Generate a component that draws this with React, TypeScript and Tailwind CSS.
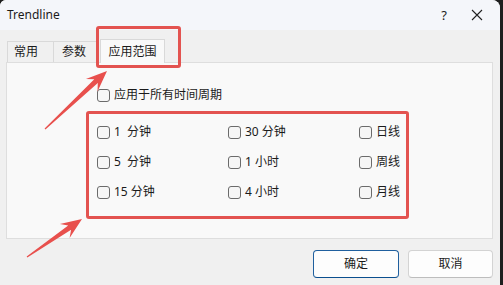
import React from "react";

type Pt = [number, number];

// barbed arrow polygon from tail to tip
const arrow = (tail: Pt, tip: Pt) => {
  const [x1, y1] = tail;
  const [x2, y2] = tip;
  const len = Math.hypot(x2 - x1, y2 - y1);
  const ux = (x2 - x1) / len;
  const uy = (y2 - y1) / len;
  const nx = -uy;
  const ny = ux;
  const at = (d: number, w: number): string =>
    `${(x2 - ux * d + nx * w).toFixed(1)},${(y2 - uy * d + ny * w).toFixed(1)}`;
  return [
    `${x1 - nx * 0.6},${y1 - ny * 0.6}`,
    `${x1 + nx * 0.6},${y1 + ny * 0.6}`,
    at(15, 2.6),
    at(21, 8.5),
    at(0, 0),
    at(21, -8.5),
    at(15, -2.6),
  ].join(" ");
};

const Check: React.FC<{ label: string }> = ({ label }) => (
  <label className="flex items-center gap-[4px] whitespace-pre">
    <span className="w-[13px] h-[13px] rounded-[3px] border border-[#6b6b6b] bg-[#f6f6f6]" />
    <span>{label}</span>
  </label>
);

const periods = [
  ["1  分钟", "30 分钟", "日线"],
  ["5  分钟", "1 小时", "周线"],
  ["15 分钟", "4 小时", "月线"],
];

export default function App() {
  return (
    <div className="relative flex w-[503px] h-[285px] bg-[#1e1e1e] text-[12px] text-[#1b1b1b] font-['Noto_Sans',_'Noto_Sans_CJK_SC',_sans-serif]">
      <div className="flex flex-col w-[500px] h-full bg-[#f0f0f0] rounded-tr-[8px] rounded-tl-[6px] overflow-hidden">
        {/* title bar */}
        <div className="flex items-center h-[30px] bg-[#f4f6fa] pl-[7px]">
          <span className="flex-1 leading-none">Trendline</span>
          <span className="w-[20px] text-center text-[13px] leading-none">?</span>
          <span className="w-[46px] flex justify-center">
            <svg width="12" height="12" viewBox="0 0 12 12" fill="none" stroke="#222" strokeWidth="1.1">
              <path d="M1 1L11 11M11 1L1 11" />
            </svg>
          </span>
        </div>

        {/* tabs */}
        <div className="flex items-end h-[32px] pl-[7px]">
          <div className="w-[47px] h-[21px] pl-[6px] flex items-center border border-b-0 border-[#d9d9d9] bg-[#f0f0f0]">常用</div>
          <div className="w-[45px] h-[21px] pl-[8px] flex items-center border border-b-0 border-l-0 border-[#d9d9d9] bg-[#f0f0f0]">参数</div>
          <div className="w-[65px] h-[24px] ml-[1px] flex items-center justify-center border border-b-0 border-[#d9d9d9] bg-[#f9f9f9] -mb-[1px] relative z-10">
            应用范围
          </div>
        </div>

        {/* panel */}
        <div className="mx-[6px] w-[487px] h-[177px] border border-[#dedede] bg-[#f9f9f9] pl-[79px] pt-[23px]">
          <div className="pl-[11px]">
            <Check label="应用于所有时间周期" />
          </div>
          <div className="mt-[7px] w-[323px] h-[108px] border-[3px] border-[#e35350] rounded-[3px] pt-[3px] pl-[8px]">
            {periods.map((row, i) => (
              <div key={i} className="grid grid-cols-[131px_131px_auto] h-[30px] items-center">
                {row.map((p) => (
                  <Check key={p} label={p} />
                ))}
              </div>
            ))}
          </div>
        </div>

        {/* buttons */}
        <div className="flex justify-end gap-[9px] pr-[7px] pt-[11px]">
          <button className="w-[86px] h-[28px] rounded-[4px] border border-[#1f5f9e] border-b-[#0b4f8f] bg-[#fdfdfd]">
            确定
          </button>
          <button className="w-[85px] h-[28px] rounded-[4px] border border-[#d3d3d3] border-b-[#bdbdbd] bg-[#fdfdfd]">
            取消
          </button>
        </div>
      </div>

      {/* annotations */}
      <div className="absolute left-[96px] top-[26px] w-[85px] h-[42px] border-[3px] border-[#e35350] rounded-[3px] pointer-events-none z-20" />
      <svg className="absolute inset-0 pointer-events-none z-20" width="503" height="285">
        <polygon points={arrow([45, 129], [107, 71])} fill="#e8504d" />
        <polygon points={arrow([27, 257], [82, 219])} fill="#e8504d" />
      </svg>
    </div>
  );
}
